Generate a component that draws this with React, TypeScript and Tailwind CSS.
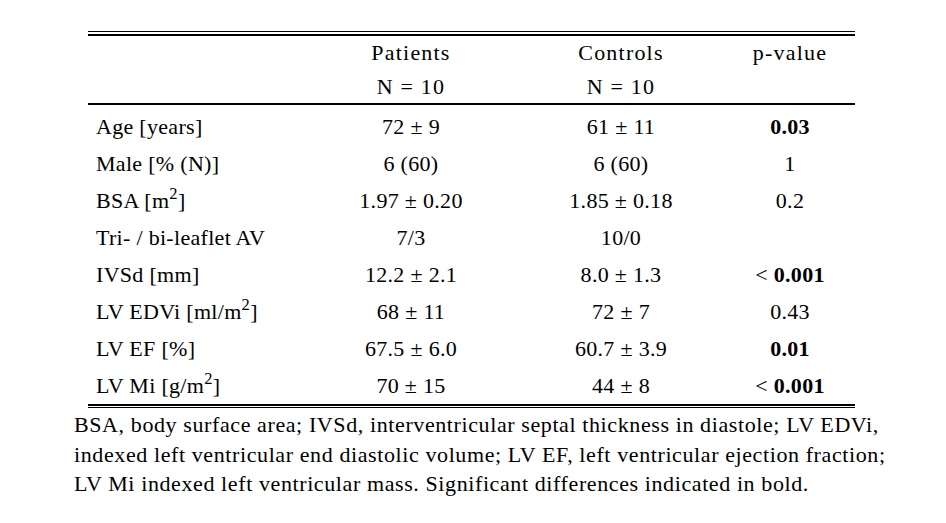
function Row({ label, p, c, v }: { label: React.ReactNode; p: string; c: string; v: React.ReactNode }) {
  return (
    <div className="grid grid-cols-[238px_170px_250px_88px] h-[37px] items-center">
      <div className="pl-[8px]">{label}</div>
      <div className="text-center">{p}</div>
      <div className="text-center">{c}</div>
      <div className="text-center">{v}</div>
    </div>
  );
}

export default function App() {
  return (
    <div className="w-[946px] h-[523px] bg-white text-black font-['Liberation_Serif'] text-[22px] leading-none pt-[31px]">
      {/* table */}
      <div className="ml-[88px] w-[767px]">
        <div className="h-px bg-black" />
        <div className="h-[2px]" />
        <div className="h-[2px] bg-black" />

        {/* header */}
        <div className="grid grid-cols-[238px_170px_250px_88px] h-[67px] tracking-[1.2px]">
          <div />
          <div className="text-center leading-[34px]">
            Patients
            <br />N = 10
          </div>
          <div className="text-center leading-[34px]">
            Controls
            <br />N = 10
          </div>
          <div className="text-center leading-[34px]">p-value</div>
        </div>
        <div className="h-[2px] bg-black" />

        {/* body */}
        <div className="pt-[3px] tracking-[0.3px]">
          <Row label="Age [years]" p="72 ± 9" c="61 ± 11" v={<b>0.03</b>} />
          <Row label="Male [% (N)]" p="6 (60)" c="6 (60)" v="1" />
          <Row label={<span>BSA [m<sup>2</sup>]</span>} p="1.97 ± 0.20" c="1.85 ± 0.18" v="0.2" />
          <Row label="Tri- / bi-leaflet AV" p="7/3" c="10/0" v="" />
          <Row label="IVSd [mm]" p="12.2 ± 2.1" c="8.0 ± 1.3" v={<span>{"< "}<b>0.001</b></span>} />
          <Row label={<span>LV EDVi [ml/m<sup>2</sup>]</span>} p="68 ± 11" c="72 ± 7" v="0.43" />
          <Row label="LV EF [%]" p="67.5 ± 6.0" c="60.7 ± 3.9" v={<b>0.01</b>} />
          <Row label={<span>LV Mi [g/m<sup>2</sup>]</span>} p="70 ± 15" c="44 ± 8" v={<span>{"< "}<b>0.001</b></span>} />
        </div>

        <div className="h-[2px] bg-black" />
        <div className="h-px" />
        <div className="h-px bg-black" />
      </div>

      {/* footnote */}
      <p className="ml-[74px] mt-[2px] text-[22px] leading-[29.5px] tracking-[0.6px] whitespace-nowrap">
        BSA, body surface area; IVSd, interventricular septal thickness in diastole; LV EDVi,
        <br />
        indexed left ventricular end diastolic volume; LV EF, left ventricular ejection fraction;
        <br />
        LV Mi indexed left ventricular mass. Significant differences indicated in bold.
      </p>
    </div>
  );
}
